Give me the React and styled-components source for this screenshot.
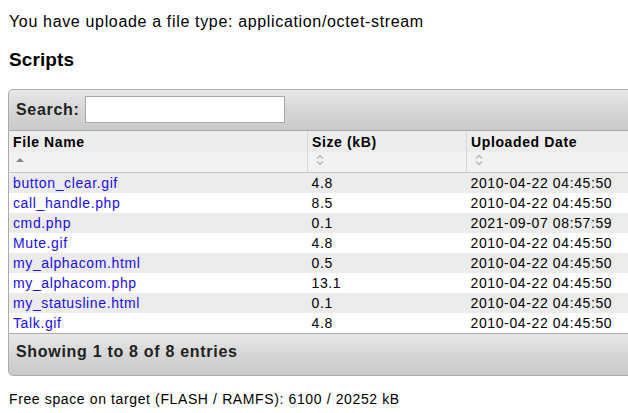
import React from 'react'
import styled, { createGlobalStyle } from 'styled-components'

const GlobalStyle = createGlobalStyle`
    html, body {
        margin: 0;
        padding: 0;
        overflow: hidden;
        background: #fff;
    }
    body {
        font-family: "Liberation Sans", Arial, sans-serif;
        color: #000;
        letter-spacing: 0.62px;
    }
`;

const files = [
    { name: 'button_clear.gif', size: '4.8', date: '2010-04-22 04:45:50' },
    { name: 'call_handle.php', size: '8.5', date: '2010-04-22 04:45:50' },
    { name: 'cmd.php', size: '0.1', date: '2021-09-07 08:57:59' },
    { name: 'Mute.gif', size: '4.8', date: '2010-04-22 04:45:50' },
    { name: 'my_alphacom.html', size: '0.5', date: '2010-04-22 04:45:50' },
    { name: 'my_alphacom.php', size: '13.1', date: '2010-04-22 04:45:50' },
    { name: 'my_statusline.html', size: '0.1', date: '2010-04-22 04:45:50' },
    { name: 'Talk.gif', size: '4.8', date: '2010-04-22 04:45:50' },
];

function SortIcon({ dir }) {
    if (dir === 'asc') {
        return (
            <svg width="10" height="8" viewBox="0 0 10 8">
                <path d="M1 6 L5 2 L9 6 Z" fill="#888" />
            </svg>
        )
    }
    return (
        <svg width="12" height="14" viewBox="0 0 12 14">
            <path d="M3 5.5 L6 2.5 L9 5.5" fill="none" stroke="#b8b8b8" strokeWidth="1.4" />
            <path d="M3 8.5 L6 11.5 L9 8.5" fill="none" stroke="#b8b8b8" strokeWidth="1.4" />
        </svg>
    )
}

function App() {
    return (
        <PageStyled>
            <GlobalStyle />
            <p className="notice">You have uploade a file type: application/octet-stream</p>
            <h3>Scripts</h3>
            <TableWrap>
                <Toolbar $top>
                    <label>Search: <input type="text" /></label>
                </Toolbar>
                <FileTable>
                    <colgroup>
                        <col style={{ width: 299 }} />
                        <col style={{ width: 159 }} />
                        <col />
                    </colgroup>
                    <thead>
                        <tr>
                            <HeadCell>
                                <span>File Name</span>
                                <SortSlot><SortIcon dir="asc" /></SortSlot>
                            </HeadCell>
                            <HeadCell>
                                <span>Size (kB)</span>
                                <SortSlot><SortIcon /></SortSlot>
                            </HeadCell>
                            <HeadCell>
                                <span>Uploaded Date</span>
                                <SortSlot><SortIcon /></SortSlot>
                            </HeadCell>
                        </tr>
                    </thead>
                    <tbody>
                        {files.map((file, i) => (
                            <Row key={file.name} $odd={i % 2 === 0}>
                                <td><a href="#">{file.name}</a></td>
                                <td>{file.size}</td>
                                <td>{file.date}</td>
                            </Row>
                        ))}
                    </tbody>
                </FileTable>
                <Toolbar>
                    <span>Showing 1 to 8 of 8 entries</span>
                </Toolbar>
            </TableWrap>
            <p className="free">Free space on target (FLASH / RAMFS): 6100 / 20252 kB</p>
        </PageStyled>
    )
}

const PageStyled = styled.div`
    padding: 13px 0 0 8px;
    width: 760px;
    .notice{
        margin: 0;
        font-size: 16px;
        line-height: 18px;
        padding-left: 1px;
        letter-spacing: 0.66px;
    }
    h3{
        margin: 18px 0 0 1px;
        font-size: 19px;
        line-height: 22px;
        font-weight: bold;
        letter-spacing: 0.1px;
    }
    .free{
        margin: 15px 0 0 1px;
        font-size: 14px;
        line-height: 16px;
    }
`;

const TableWrap = styled.div`
    margin-top: 18px;
    width: 720px;
`;

const Toolbar = styled.div`
    display: flex;
    align-items: center;
    box-sizing: border-box;
    height: ${p => p.$top ? '42px' : '43px'};
    padding: ${p => p.$top ? '0 7px 1px' : '0 7px 5px'};
    border: 1px solid #aaa;
    border-radius: ${p => p.$top ? '5px 5px 0 0' : '0 0 5px 5px'};
    background: linear-gradient(to bottom, #e8e8e8 0%, #d6d6d6 50%, #c9c9c9 100%);
    color: #222;
    font-weight: bold;
    font-size: 16px;
    letter-spacing: 0.7px;
    label{
        display: flex;
        align-items: center;
        gap: 5px;
    }
    input{
        width: 194px;
        height: 23px;
        margin: 0;
        padding: 1px 2px;
        border: 1px solid #a9a9a9;
        background: #fff;
        font: 14px "Liberation Sans", Arial, sans-serif;
    }
`;

const FileTable = styled.table`
    width: 100%;
    table-layout: fixed;
    border-collapse: collapse;
    border-left: 1px solid #aaa;
    font-size: 14px;
    td{
        height: 20px;
        padding: 0 4px;
        line-height: 20px;
        white-space: nowrap;
    }
    a{
        color: #1a0dee;
        text-decoration: none;
    }
`;

const HeadCell = styled.th`
    padding: 2px 4px 0;
    height: 39px;
    text-align: left;
    vertical-align: top;
    font-size: 14px;
    font-weight: bold;
    color: #000;
    background: linear-gradient(to bottom, #ededed 0%, #ededed 50%, #f2f2f2 50%, #f2f2f2 100%);
    border-right: 1px solid #d6d6d6;
    border-bottom: 1px solid #c8c8c8;
    span{
        display: block;
        line-height: 18px;
    }
`;

const SortSlot = styled.div`
    display: flex;
    align-items: center;
    height: 18px;
    padding-left: 2px;
`;

const Row = styled.tr`
    background: ${p => p.$odd ? '#ececec' : '#fff'};
    color: #000;
`;

export default App
